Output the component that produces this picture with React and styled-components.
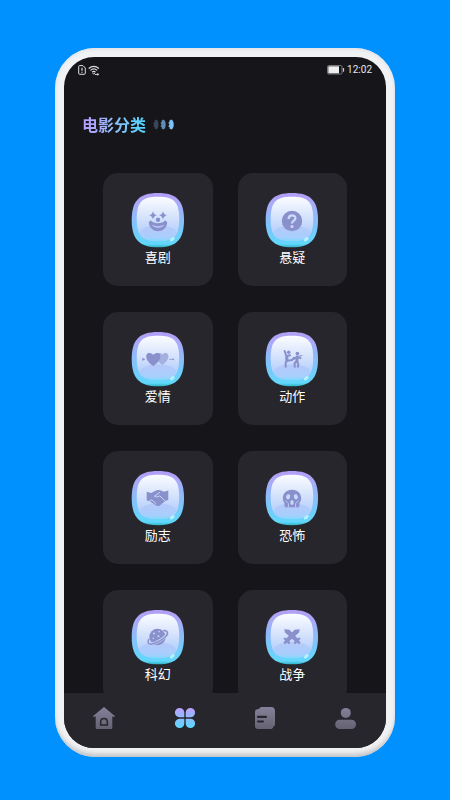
import React, { useId } from "react";
import styled, { createGlobalStyle } from "styled-components";

const GlobalStyle = createGlobalStyle`
  * { box-sizing: border-box; }
  body {
    margin: 0;
    background: #0091ff;
    font-family: "Noto Sans CJK SC", "Noto Sans", sans-serif;
  }
`;

const Page = styled.div`
  display: flex;
  height: 100vh;
  padding: 48px 55px 43px;
  background: #0091ff;
`;

const Phone = styled.div`
  display: flex;
  flex: 1;
  min-width: 0;
  padding: 9px;
  border-radius: 40px;
  background: #f1f2f4;
  box-shadow: inset 0 -5px 5px -2px #bfc0c3, inset 0 2px 3px #e2e4e8;
`;

const Screen = styled.div`
  display: flex;
  flex: 1;
  flex-direction: column;
  min-width: 0;
  overflow: hidden;
  border-radius: 30px;
  background: #16161a;
  color: #fff;
`;

const StatusBar = styled.div`
  display: flex;
  flex-shrink: 0;
  align-items: center;
  justify-content: space-between;
  height: 26px;
  padding: 0 14px;
`;

const StatusGroup = styled.div`
  display: flex;
  align-items: center;
  gap: 2px;
`;

const Clock = styled.time`
  font: 400 10px/14px Roboto, sans-serif;
  color: #e6e6e8;
`;

const Header = styled.header`
  display: flex;
  flex-shrink: 0;
  align-items: center;
  gap: 7px;
  padding: 29px 18px 37px;
`;

const Title = styled.h1`
  margin: 0;
  font-size: 16px;
  font-weight: 700;
  line-height: 24px;
  color: transparent;
  background: linear-gradient(100deg, #b69cff 8%, #8fc0fb 52%, #55d3ff 90%);
  background-clip: text;
  -webkit-background-clip: text;
`;

const Scroller = styled.main`
  flex: 1;
  min-height: 0;
  overflow-y: auto;
  scrollbar-width: none;
`;

const Grid = styled.div`
  display: grid;
  grid-template-columns: 1fr 1fr;
  gap: 26px 25px;
  padding: 0 39px 26px;
`;

const Card = styled.button`
  display: flex;
  flex-direction: column;
  align-items: center;
  height: 113px;
  padding: 19px 0 0;
  border: 0;
  border-radius: 15px;
  background: #27262c;
  color: #fff;
  font-family: inherit;
  cursor: pointer;
`;

const CardLabel = styled.span`
  font-size: 13px;
  line-height: 18px;
`;

const Nav = styled.nav`
  display: flex;
  flex-shrink: 0;
  height: 55px;
  padding-bottom: 5px;
  background: #27262c;
`;

const NavButton = styled.button`
  display: flex;
  flex: 1;
  align-items: center;
  justify-content: center;
  padding: 0;
  border: 0;
  background: none;
  cursor: pointer;
`;

const INK = "#8990cb";

function Bubble({ children }) {
  const id = useId();
  return (
    <svg width="54" height="56" viewBox="0 0 54 56" aria-hidden="true">
      <defs>
        <linearGradient id={`${id}rim`} x1="0" y1="0" x2="0" y2="1">
          <stop offset="0" stopColor="#b39df5" />
          <stop offset=".18" stopColor="#aaa9f8" />
          <stop offset=".6" stopColor="#7fc4fb" />
          <stop offset=".94" stopColor="#62d8fb" />
          <stop offset="1" stopColor="#2eb2c4" />
        </linearGradient>
        <linearGradient id={`${id}face`} x1="0" y1="0" x2="0" y2="1">
          <stop offset="0" stopColor="#fbfcff" />
          <stop offset=".35" stopColor="#dfe9fd" />
          <stop offset=".75" stopColor="#bcd3fc" />
          <stop offset="1" stopColor="#aacdfd" />
        </linearGradient>
        <linearGradient id={`${id}pool`} x1="0" y1="0" x2="0" y2="1">
          <stop offset="0" stopColor="#b7c9f9" />
          <stop offset=".75" stopColor="#a8cefd" />
          <stop offset="1" stopColor="#82dafb" />
        </linearGradient>
      </defs>
      <path d="M27 1C46 1 53 9 53 28C53 47 46 55.3 27 55.3C8 55.3 .7 47 .7 28C.7 9 8 1 27 1Z" fill={`url(#${id}rim)`} />
      <path d="M27 4.7C43 4.7 48.2 10 48.2 27C48.2 44 43 49 27 49C11 49 5.7 44 5.7 27C5.7 10 11 4.7 27 4.7Z" fill={`url(#${id}face)`} />
      <ellipse cx="27" cy="41.2" rx="18.3" ry="8" fill={`url(#${id}pool)`} />
      <ellipse cx="41.3" cy="47.2" rx="2.8" ry="1.6" transform="rotate(-38 41.3 47.2)" fill="#b5f1ff" />
      {children}
    </svg>
  );
}

const Clown = () => (
  <g fill={INK}>
    <path d="M22 19Q22.6 22.7 26 23.3Q22.6 24 22 27.6Q21.4 24 18 23.3Q21.4 22.7 22 19ZM32 19Q32.6 22.7 36 23.3Q32.6 24 32 27.6Q31.4 24 28 23.3Q31.4 22.7 32 19Z" />
    <circle cx="27" cy="27.7" r="2.2" />
    <path fillRule="evenodd" d="M20 28.6Q17.2 29 18 32.3C19.3 36.7 22.6 39.2 27 39.2C31.4 39.2 34.7 36.7 36 32.3Q36.8 29 34 28.6C31 32.2 23 32.2 20 28.6ZM20.8 32.6C24 34.8 30 34.8 33.2 32.6C31 37 23 37 20.8 32.6Z" />
  </g>
);

const Question = () => (
  <g>
    <circle cx="27" cy="29" r="10.2" fill={INK} />
    <path d="M23.6 27C23.6 22.1 30.6 22.4 30.4 26.4C30.3 28.8 27 28.6 27 31.6" fill="none" stroke="#cbdafb" strokeWidth="2.3" />
    <circle cx="27" cy="34.4" r="1.5" fill="#cbdafb" />
  </g>
);

const Hearts = () => (
  <g>
    <path d="M31.3 34C21.5 27.5 25.5 18.3 31.3 23.6C37.4 18.3 41.5 27.5 31.3 34Z" fill="#a5b0e0" />
    <path d="M22.3 35C11 28 15 18 22.3 23.8C29.6 18 33.6 28 22.3 35Z" fill={INK} />
    <path d="m11.3 26.8 3 1.5-3 1.6Z" fill={INK} />
    <path d="M38 28.4H42" fill="none" stroke={INK} strokeWidth=".7" />
    <circle cx="42.3" cy="28.4" r=".8" fill={INK} />
  </g>
);

const Fighters = () => (
  <g fill="none" stroke={INK} strokeWidth="2" strokeLinecap="round" strokeLinejoin="round">
    <circle cx="23.7" cy="21.2" r="1.8" fill={INK} stroke="none" />
    <circle cx="32.4" cy="22.5" r="1.8" fill={INK} stroke="none" />
    <path d="M19.6 20 21.4 25.2 25 24.2M21.6 25.5 22 29.8 20.6 32 20.7 35.8M22.3 29.7 27 29 29 26.8" />
    <path d="M32 25.6 32 30 33.2 32.7 33 35.8M31.8 30 29.6 32 29.8 35.8M32 25.7 35.5 27.2M31.8 26.4 28.3 28" />
    <path d="M21.8 26V29.5M32 26V29.5" strokeWidth="3" />
    <path d="m33 25.3 4-.7" strokeWidth="1" />
  </g>
);

const Handshake = () => (
  <g>
    <path d="M15.7 21.8 20 23 25 20.4Q27 19.5 29.2 20.3L33 21.7 37.3 20.4V29.8L34 31.2 28.8 35.4Q27 36.8 25.2 35.4L18.8 31.2 15.7 30.6Z" fill={INK} />
    <path d="M29 22.2 23.4 26.2Q25.6 28.2 28.8 25.8L34.4 31.2M17.6 31.6 20.8 29.8 25.2 33.8" fill="none" stroke="#c6d7fb" strokeWidth="1" strokeLinejoin="round" />
  </g>
);

const Scream = () => (
  <g>
    <path d="M27 19.7C32.8 19.7 36.2 23.4 36.2 28.2Q36.2 31 34.6 32.8L34.2 37.2H19.8L19.4 32.8Q17.8 31 17.8 28.2C17.8 23.4 21.2 19.7 27 19.7Z" fill={INK} />
    <ellipse cx="23.1" cy="26.8" rx="2" ry="2.6" transform="rotate(18 23.1 26.8)" fill="#c8d8fb" />
    <ellipse cx="30.9" cy="26.8" rx="2" ry="2.6" transform="rotate(-18 30.9 26.8)" fill="#c8d8fb" />
    <ellipse cx="27" cy="32.6" rx="1.6" ry="2.5" fill="#c8d8fb" />
    <path d="m20.4 30.5 3 3v3.8M33.6 30.5l-3 3v3.8" fill="none" stroke="#c8d8fb" strokeWidth=".8" />
  </g>
);

const Planet = () => (
  <g>
    <circle cx="26.5" cy="28" r="8.2" fill={INK} />
    <g transform="rotate(-30 26.5 28)">
      <path d="M18 26C15 27.5 15.2 29.7 18 31C22 32.8 31 32.8 35 31C37.8 29.7 38 27.5 35 26" fill="none" stroke="#c5d6fb" strokeWidth="3" />
      <path d="M18.3 25.4C14.7 27 14.9 30 18 31.3C22 33 31 33 35 31.3C38.1 30 38.3 27 34.7 25.4" fill="none" stroke={INK} strokeWidth="1.5" />
    </g>
    <g fill="#c9d9fb">
      <circle cx="23" cy="24.5" r="1" />
      <circle cx="28" cy="22.6" r=".8" />
      <circle cx="27.5" cy="27.3" r="1" />
      <circle cx="22.3" cy="29.2" r=".7" />
    </g>
  </g>
);

const Swords = () => (
  <g fill={INK}>
    <path d="M19.2 20.2 24.4 20.8 32.7 29.5 34 28.2 35.6 29.8 33.9 31.5 35.7 33.4 33.9 35.2 32 33.4 30.2 35.2 28.5 33.5 29.8 32.2 20 23.4Z" />
    <path d="M34.8 20.2 29.6 20.8 21.3 29.5 20 28.2 18.4 29.8 20.1 31.5 18.3 33.4 20.1 35.2 22 33.4 23.8 35.2 25.5 33.5 24.2 32.2 34 23.4Z" />
  </g>
);

const genres = [
  { label: "喜剧", Glyph: Clown },
  { label: "悬疑", Glyph: Question },
  { label: "爱情", Glyph: Hearts },
  { label: "动作", Glyph: Fighters },
  { label: "励志", Glyph: Handshake },
  { label: "恐怖", Glyph: Scream },
  { label: "科幻", Glyph: Planet },
  { label: "战争", Glyph: Swords },
];

const SimIcon = () => (
  <svg width="8" height="10" viewBox="0 0 8 10" fill="none" stroke="#dedee1" aria-hidden="true">
    <path d="M1.5.6H5L7.3 3v5.3q0 1-1 1H1.7q-1 0-1-1V1.5q0-.9.8-.9Z" />
    <path d="M4 2.8v3M4 6.8v1" strokeWidth="1.2" />
  </svg>
);

const WifiIcon = () => (
  <svg width="12" height="11" viewBox="0 0 12 11" fill="none" stroke="#dedee1" strokeWidth="1.2" aria-hidden="true">
    <path d="M.7 3.5Q5.7-.9 10.9 3.5M2.4 5.4Q5.8 2.4 9.2 5.4M4.1 7.2Q5.8 5.7 7.5 7.2" />
    <path d="m4.7 8 1.1 1.3L6.9 8M7 9.5h3.8M9.8 8v2.5" strokeWidth=".9" />
  </svg>
);

const BatteryIcon = () => (
  <svg width="18" height="10" viewBox="0 0 18 10" aria-hidden="true">
    <rect x=".5" y=".5" width="14.5" height="8.5" rx="1.2" fill="none" stroke="#77777b" />
    <rect x="1.3" y="1.3" width="10.7" height="7" fill="#eeeeef" />
    <path d="M16.5 3v3.7" stroke="#c8c8cc" strokeWidth="1.2" />
  </svg>
);

const Beads = () => (
  <svg width="22" height="11" viewBox="0 0 22 11" aria-hidden="true">
    <path d="M3.2.4C6.2 1.8 6.2 9.2 3.2 10.6L1.5 9.3 1.8 8 .3 7.2 1.1 5.5.3 3.8 1.8 3 1.5 1.7Z" fill="#39475a" />
    <path d="M10.3.4C13.6 1.8 13.6 9.2 10.3 10.6L8.5 9.3 8.8 8 7.4 7.2 8.6 5.5 7.4 3.8 8.8 3 8.5 1.7Z" fill="#5e8cb4" />
    <path d="M18.3.4C21.6 1.8 21.6 9.2 18.3 10.6L16.3 9.3 16.6 8 15.2 7.2 16.6 5.5 15.2 3.8 16.6 3 16.3 1.7Z" fill="#7dc2fb" />
  </svg>
);

function NavIcon({ active, children }) {
  const id = useId();
  return (
    <svg width="24" height="24" viewBox="0 0 24 24" fill={`url(#${id}g)`} aria-hidden="true">
      <defs>
        <linearGradient id={`${id}g`} gradientUnits="userSpaceOnUse" x1="12" y1="1" x2="12" y2="23">
          <stop offset="0" stopColor={active ? "#c29cff" : "#85819a"} />
          <stop offset="1" stopColor={active ? "#55dcff" : "#656272"} />
        </linearGradient>
      </defs>
      {children}
    </svg>
  );
}

const navItems = [
  {
    label: "首页",
    shape: (
      <>
        <path d="M12 1 23.2 10.2Q22.5 11 20.3 10.6V22q0 1-1 1H4.7q-1 0-1-1V10.6Q1.5 11 .8 10.2Z" />
        <path d="M8.7 19.1V15.8a3.3 3.3 0 0 1 6.6 0v3.3Z" fill="none" stroke="#27262c" strokeWidth="1.5" />
      </>
    ),
  },
  {
    label: "分类",
    active: true,
    shape: (
      <>
        <path d="M11.3 11.3H6.5A4.7 4.7 0 1 1 11.3 6.6ZM12.7 11.3V6.6a4.7 4.7 0 1 1 4.7 4.7Z" />
        <path d="M11.3 12.7H6.5a4.7 4.7 0 1 0 4.8 4.7ZM12.7 12.7v4.7a4.7 4.7 0 1 0 4.7-4.7Z" />
      </>
    ),
  },
  {
    label: "资讯",
    shape: (
      <>
        <path d="M6 3Q6.5 1 9 1H18q4 0 4 4V19q0 1-1.5 1.2Q20 23 17.5 23H5q-3 0-3-3V6Q2 3.5 4 3.3Z" />
        <path d="M5 10.8h8M5 15.5h5" fill="none" stroke="#27262c" strokeWidth="2.2" strokeLinecap="round" />
      </>
    ),
  },
  {
    label: "我的",
    shape: (
      <>
        <circle cx="11.8" cy="6.9" r="5" />
        <rect x="1.2" y="13.8" width="20.8" height="9.2" rx="4.5" />
      </>
    ),
  },
];

export default function App() {
  return (
    <Page>
      <GlobalStyle />
      <Phone>
        <Screen>
          <StatusBar>
            <StatusGroup>
              <SimIcon />
              <WifiIcon />
            </StatusGroup>
            <StatusGroup>
              <BatteryIcon />
              <Clock>12:02</Clock>
            </StatusGroup>
          </StatusBar>
          <Header>
            <Title>电影分类</Title>
            <Beads />
          </Header>
          <Scroller>
            <Grid>
              {genres.map(({ label, Glyph }) => (
                <Card key={label} type="button">
                  <Bubble>
                    <Glyph />
                  </Bubble>
                  <CardLabel>{label}</CardLabel>
                </Card>
              ))}
            </Grid>
          </Scroller>
          <Nav aria-label="主导航">
            {navItems.map(({ label, active, shape }) => (
              <NavButton key={label} type="button" aria-label={label} aria-current={active ? "page" : undefined}>
                <NavIcon active={active}>{shape}</NavIcon>
              </NavButton>
            ))}
          </Nav>
        </Screen>
      </Phone>
    </Page>
  );
}
